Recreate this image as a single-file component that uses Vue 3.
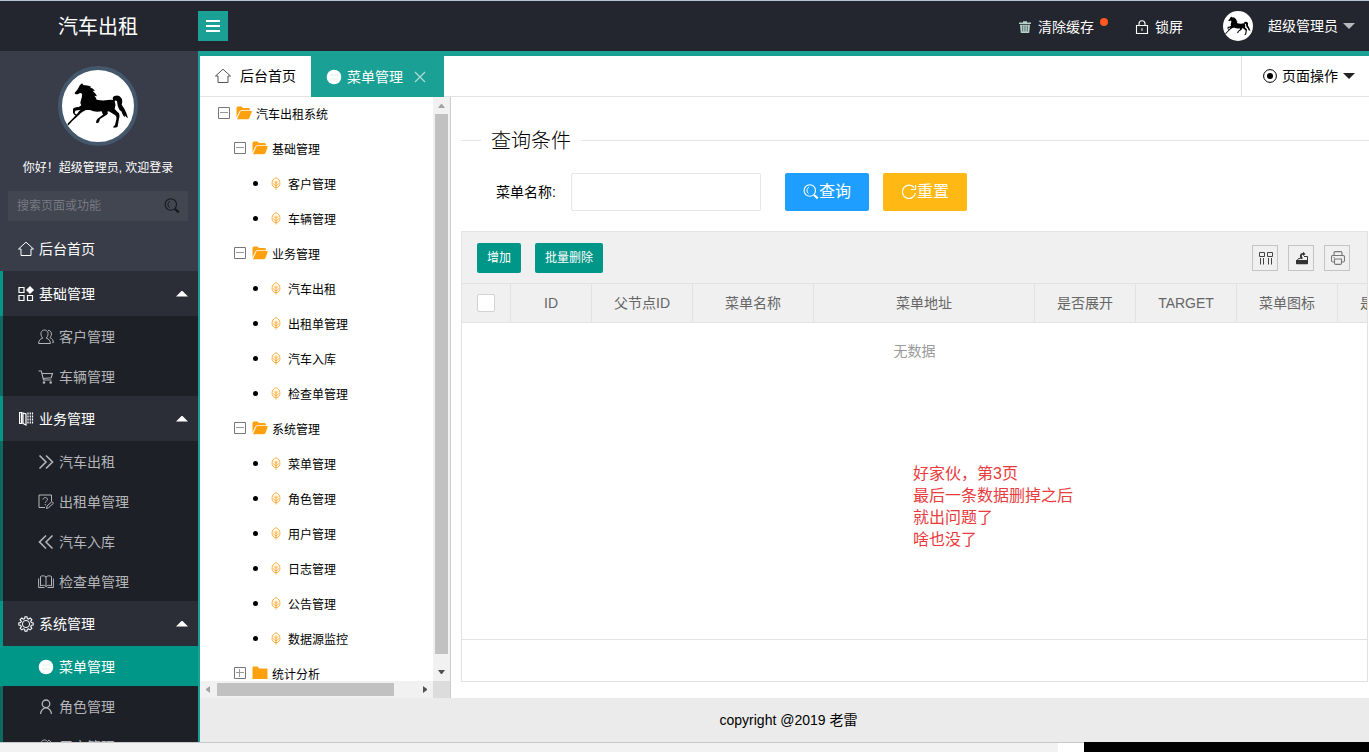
<script setup>
import { ref } from 'vue'

const keyword = ref('')
const menuName = ref('')
const checkedAll = ref(false)

const groups = [
  {
    title: '基础管理',
    icon: 'blocks',
    items: [
      { title: '客户管理', icon: 'users' },
      { title: '车辆管理', icon: 'cart' },
    ],
  },
  {
    title: '业务管理',
    icon: 'ledger',
    items: [
      { title: '汽车出租', icon: 'next' },
      { title: '出租单管理', icon: 'form' },
      { title: '汽车入库', icon: 'prev' },
      { title: '检查单管理', icon: 'book' },
    ],
  },
  {
    title: '系统管理',
    icon: 'gear',
    items: [
      { title: '菜单管理', icon: 'disc', active: true },
      { title: '角色管理', icon: 'person' },
      { title: '用户管理', icon: 'users' },
    ],
  },
]

const tree = [
  { title: '汽车出租系统', level: 1, open: true },
  { title: '基础管理', level: 2, open: true },
  { title: '客户管理', level: 3 },
  { title: '车辆管理', level: 3 },
  { title: '业务管理', level: 2, open: true },
  { title: '汽车出租', level: 3 },
  { title: '出租单管理', level: 3 },
  { title: '汽车入库', level: 3 },
  { title: '检查单管理', level: 3 },
  { title: '系统管理', level: 2, open: true },
  { title: '菜单管理', level: 3 },
  { title: '角色管理', level: 3 },
  { title: '用户管理', level: 3 },
  { title: '日志管理', level: 3 },
  { title: '公告管理', level: 3 },
  { title: '数据源监控', level: 3 },
  { title: '统计分析', level: 2, open: false },
]

const columns = [
  { title: 'ID', size: 'w80' },
  { title: '父节点ID', size: 'w100' },
  { title: '菜单名称', size: 'w120' },
  { title: '菜单地址', size: 'w220' },
  { title: '是否展开', size: 'w100' },
  { title: 'TARGET', size: 'w100' },
  { title: '菜单图标', size: 'w100' },
  { title: '是否可用', size: 'w100' },
]
</script>

<template>
  <div class="page">
    <svg class="sprite" aria-hidden="true">
      <symbol id="home" viewBox="0 0 16 16"><path d="M.5 8 8 1.200 15.500 8H13v6.500H3V8z" fill="none" stroke="currentColor" /></symbol>
      <symbol id="blocks" viewBox="0 0 16 16"><path d="M1 1.500h5v5H1zM1 9.500h5v5H1zM9.500 9.500h5v5h-5z" fill="none" stroke="currentColor" stroke-width="1.200" /><path d="M12 0l4 4-4 4-4-4z" fill="currentColor" /></symbol>
      <symbol id="ledger" viewBox="0 0 16 16"><path d="M1.600 1.500h2v11h-2zM5 2l3 1v11l-3-1.500z" fill="none" stroke="currentColor" stroke-width="1.200" /><path d="M10 1.500v12M12.300 1.500v12M14.500 1.500v12" stroke="currentColor" stroke-width="1.200" stroke-dasharray="2 1" /></symbol>
      <symbol id="gear" viewBox="0 0 16 16"><path d="M6.700 2.600 7 .7h2l.3 1.900 1.300.5 1.600-1.100 1.700 1.700-1.200 1.600.6 1.300 1.900.4v2l-1.900.3-.6 1.400 1.200 1.600-1.700 1.600-1.600-1.100-1.300.5-.3 1.900H7l-.3-1.900-1.300-.5-1.600 1.100-1.700-1.600 1.200-1.600-.6-1.400L.8 9V7l1.900-.4.6-1.300-1.200-1.600L3.800 2l1.600 1.100z" fill="none" stroke="currentColor" stroke-width="1.100" /><circle cx="8" cy="8" r="3.600" fill="none" stroke="currentColor" /></symbol>
      <symbol id="users" viewBox="0 0 16 16"><path d="M.6 14.500C.8 11.500 2 10 4.700 9.200 1.500 5.200 3 1 6.500 1s5 4.200 1.800 8.200c2.700.8 3.900 2.300 4.100 5.300zM10 1.400c3.600 0 4.500 4.300 2 7.200 2.300 1 3.300 2.800 3.400 5h-1.200" fill="none" stroke="currentColor" /></symbol>
      <symbol id="cart" viewBox="0 0 16 16"><path d="M.5 2h2.800l2.200 9h8M4 4.500h10.500l-1.300 4.200-8.200.8" fill="none" stroke="currentColor" stroke-width="1.100" /><circle cx="6" cy="13.500" r="1.300" fill="currentColor" /><circle cx="12.700" cy="13.500" r="1.300" fill="currentColor" /></symbol>
      <symbol id="next" viewBox="0 0 16 16"><path d="M1.500 1.500 8 8l-6.500 6.500M8 1.500 14.500 8 8 14.500" fill="none" stroke="currentColor" stroke-width="1.600" /></symbol>
      <symbol id="prev" viewBox="0 0 16 16"><path d="M8 1.500 1.500 8 8 14.500M14.500 1.500 8 8l6.500 6.500" fill="none" stroke="currentColor" stroke-width="1.600" /></symbol>
      <symbol id="form" viewBox="0 0 16 16"><path d="M13.500 7V1H1v12.500h6M5 5.500C5 3 9.500 3 9.500 5.500c0 1.600-2.200 1.500-2.200 3.300M7.300 10v1.300M8.500 14.500l.5-2.500 5-4.500 1.500 1.800-5 4.400z" fill="none" stroke="currentColor" /></symbol>
      <symbol id="book" viewBox="0 0 16 16"><path d="M8 3C6.500 1.500 4 1.500 2.500 2.500V12C4 11 6.500 11 8 12.500 9.500 11 12 11 13.500 12V2.500C12 1.500 9.500 1.500 8 3v9.500M.6 4.500v9h5.900M15.400 4.500v9H9.500" fill="none" stroke="currentColor" /></symbol>
      <symbol id="disc" viewBox="0 0 16 16"><circle cx="8" cy="8" r="7.300" fill="currentColor" /><path d="M4 6h8M4 10h8" stroke="#1aa094" stroke-width=".4" opacity=".35" /></symbol>
      <symbol id="person" viewBox="0 0 16 16"><circle cx="8" cy="4.800" r="3.800" fill="none" stroke="currentColor" stroke-width="1.300" /><path d="M2.500 15c.3-3.500 2.500-5.500 5.500-6.300 3 .8 5.200 2.800 5.500 6.300" fill="none" stroke="currentColor" stroke-width="1.300" /></symbol>
      <symbol id="search" viewBox="0 0 16 16"><circle cx="6.800" cy="6.500" r="5.700" fill="none" stroke="currentColor" stroke-width="1.100" /><path d="M5.500 9.500C3.300 8 3.500 4.300 6 3.300" fill="none" stroke="currentColor" /><path d="m11 11 3.800 3.300" stroke="currentColor" stroke-width="2.200" /></symbol>
      <symbol id="refresh" viewBox="0 0 16 16"><path d="M14.500 9A6.600 6.600 0 1 1 13 3.500M14.500 1v4.500H10" fill="none" stroke="currentColor" stroke-width="1.200" /></symbol>
      <symbol id="trash" viewBox="0 0 12 12"><path d="M0 1.500h12V3H0zM4 .2h4v1.600H4zM1 3.700h10L10.200 12H1.800z" fill="#b5cfc8" /><path d="M3.700 4.500v6M6 4.500v6M8.300 4.500v6" stroke="#3d5550" stroke-width=".8" /></symbol>
      <symbol id="lock" viewBox="0 0 14 14"><path d="M1.500 5.500h11v8h-11zM4 5.500V3.800a3 3 0 0 1 6 0v1.700M7 8.300v2.400" fill="none" stroke="currentColor" stroke-width="1.100" /></symbol>
      <symbol id="target" viewBox="0 0 14 14"><circle cx="7" cy="7" r="6.400" fill="none" stroke="currentColor" /><circle cx="7" cy="7" r="3" fill="currentColor" /></symbol>
      <symbol id="close" viewBox="0 0 12 12"><path d="m1 1 10 10M11 1 1 11" stroke="currentColor" stroke-width="1.100" /></symbol>
      <symbol id="minus" viewBox="0 0 12 12"><path d="M.5.5h11v11H.5z" fill="none" stroke="#777" /><path d="M2 5.500h8" stroke="#999" /></symbol>
      <symbol id="plus" viewBox="0 0 12 12"><path d="M.5.5h11v11H.5z" fill="none" stroke="#777" /><path d="M2 5.500h8M5.500 2v8" stroke="#999" /></symbol>
      <symbol id="folder-open" viewBox="0 0 16 14"><path d="M.5 11.500V2q0-1.500 1.500-1.500h3.500L7 2h5.500Q14 2 14 3.500v.7H5.500Q3.800 4.200 3.200 5.800z" fill="#ffa00f" /><path d="M1 13.300 4 6.300q.5-1.200 1.600-1.200h9.600q.8 0 .5.900l-2.400 6.300q-.4 1-1.400 1z" fill="#ffa00f" /></symbol>
      <symbol id="folder" viewBox="0 0 16 14"><path d="M.5 1.500q0-1 1-1h4L7 2.500h7.500q1 0 1 1v9.500H.5z" fill="#ffa00f" /></symbol>
      <symbol id="leaf" viewBox="0 0 10 13"><path d="M5 .7C7.500 2 9 3.500 8.800 5.500 9.500 8 8 10.400 5 10.700 2 10.400.5 8 1.200 5.500 1 3.500 2.500 2 5 .7zM5 3.500v9M5 6.500l2.300-2.200M5 9l3-2.500M5 6.500 2.800 4.300M5 9 2 6.500" fill="none" stroke="#f9a52a" stroke-width=".9" /></symbol>
      <symbol id="cols" viewBox="0 0 14 14"><path d="M.5 1.500h5v4h-5zM8.500 1.500h5v4h-5zM1.500 7v6.500M4.500 7v6.500M9.500 7v6.500M12.500 7v6.500" fill="none" stroke="#444" /></symbol>
      <symbol id="export" viewBox="0 0 14 14"><path d="M1 9h12v3.500q0 .8-.8.800H1.800q-.8 0-.8-.8z" fill="#333" /><path d="M2.500 9 3.500 7.500h2M9 5.500h3.500V9" fill="none" stroke="#333" /><path d="M5.500 7.500C4 4 5.500 2 8 2V.7L10.500 3 8 5V3.700C6.500 3.700 6.500 5.500 7.500 6.500V8h-2z" fill="#333" /></symbol>
      <symbol id="print" viewBox="0 0 14 14"><path d="M3 4.500V2q0-1.400 1.400-1.400h5.200Q11 .6 11 2v2.500M3 11H2Q.5 11 .5 9.500V6Q.5 4.500 2 4.500h10q1.500 0 1.500 1.500v3.500Q13.500 11 12 11h-1M3.500 8h7v4q0 1.400-1.400 1.400H4.900Q3.500 13.400 3.500 12zM2.500 6.500h1" fill="none" stroke="#777" stroke-width="1.100" /></symbol>
      <symbol id="horse" viewBox="36 30 216 216">
        <path d="M97 71l4 5q11-2 23 4l-4 2q10 4 15 11l-7-1q9 8 13 17l-8-2q5 5 7 12 17 4 34 1 10-2 15 0-3-10 5-12 13-5 22 9 2 7-1 17 9 12 14 25l5 16q-5-3-10-9l1 6q-6-5-8-11l-2-6q-8-5-11-15-2-8-3-16-4-5-7-1 5 13 0 24 6 7 13 13 3 6 0 16l-4 22q2 5-13 5-2-3 5-8l4-17q2-8-3-12l-17-11q-5-2-7 0 4 6-4 11l-18 11-3 9q-3 5-9 2 0-6 4-11 8-7 17-13l-4-10q-20 4-35-4h-12q-12 6-16 10-12 12-26 24-8 10-13 14-3-2 1-8 6-6 12-12l18-20q2-5 8-9l-16 3-2 8 7 5q3 3-1 4-10-6-11-11v-12q6-6 17-5 6-3 8-5-5-8-1-16 4-10 3-18-4-5-10-1-6 4-11 0-3-3 2-6 7-7 10-15 1-5 10-11z" fill="#000" />
      </symbol>
    </svg>

    <header class="header">
      <h1 class="logo">汽车出租</h1>
      <button class="toggle" type="button" aria-label="切换菜单"><span></span><span></span><span></span></button>
      <nav class="tools">
        <a class="tool cache" href="#"><svg class="icon12"><use href="#trash" /></svg>清除缓存<i class="dot"></i></a>
        <a class="tool lock" href="#"><svg class="icon14"><use href="#lock" /></svg>锁屏</a>
        <a class="tool user" href="#"><svg class="face"><use href="#horse" /></svg>超级管理员<i class="caret down pale"></i></a>
      </nav>
    </header>

    <div class="body">
      <aside class="side">
        <div class="profile">
          <svg class="avatar"><use href="#horse" /></svg>
          <p class="hello">你好！超级管理员, 欢迎登录</p>
        </div>
        <label class="find">
          <input v-model="keyword" type="text" placeholder="搜索页面或功能" aria-label="搜索页面或功能" />
          <svg class="icon16"><use href="#search" /></svg>
        </label>
        <a class="nav-home" href="#"><svg class="icon16"><use href="#home" /></svg>后台首页</a>
        <section v-for="g in groups" :key="g.title" class="group">
          <a class="group-title" href="#"><svg class="icon16"><use :href="'#' + g.icon" /></svg>{{ g.title }}<i class="caret up"></i></a>
          <a v-for="i in g.items" :key="i.title" class="item" :class="{ active: i.active }" href="#">
            <svg class="icon16"><use :href="'#' + i.icon" /></svg>{{ i.title }}
          </a>
        </section>
      </aside>

      <div class="main">
        <div class="tabs">
          <a class="tab home" href="#"><svg class="icon16"><use href="#home" /></svg>后台首页</a>
          <div class="tab current">
            <svg class="icon16"><use href="#disc" /></svg>菜单管理
            <button class="close" type="button" aria-label="关闭"><svg class="icon12"><use href="#close" /></svg></button>
          </div>
          <button class="page-op" type="button"><svg class="icon14"><use href="#target" /></svg>页面操作<i class="caret down dark"></i></button>
        </div>

        <div class="workspace">
          <div class="tree-pane">
            <ul class="tree">
              <li v-for="n in tree" :key="n.level + n.title" class="node" :class="'level' + n.level">
                <span class="marks">
                  <template v-if="n.level < 3">
                    <svg class="icon12"><use :href="n.open ? '#minus' : '#plus'" /></svg>
                    <svg class="folder"><use :href="n.open ? '#folder-open' : '#folder'" /></svg>
                  </template>
                  <template v-else>
                    <i class="bullet"></i>
                    <svg class="leaf"><use href="#leaf" /></svg>
                  </template>
                </span>
                <span>{{ n.title }}</span>
              </li>
            </ul>
            <div class="bar vertical"><i class="arrow top"></i><i class="thumb"></i><i class="arrow bottom"></i></div>
            <div class="bar horizontal"><i class="arrow left"></i><span class="track"><i class="thumb"></i></span><i class="arrow right"></i></div>
            <div class="corner"></div>
          </div>

          <main class="content">
            <fieldset class="query"><legend>查询条件</legend></fieldset>
            <form class="form" @submit.prevent>
              <label for="menu-name">菜单名称:</label>
              <input id="menu-name" v-model="menuName" type="text" />
              <button class="btn blue" type="submit"><svg class="icon16"><use href="#search" /></svg>查询</button>
              <button class="btn amber" type="reset"><svg class="icon16"><use href="#refresh" /></svg>重置</button>
            </form>
            <div class="grid">
              <div class="toolbar">
                <button class="small" type="button">增加</button>
                <button class="small" type="button">批量删除</button>
                <div class="actions">
                  <button type="button" aria-label="筛选列"><svg class="icon14"><use href="#cols" /></svg></button>
                  <button type="button" aria-label="导出"><svg class="icon14"><use href="#export" /></svg></button>
                  <button type="button" aria-label="打印"><svg class="icon14"><use href="#print" /></svg></button>
                </div>
              </div>
              <div class="rows">
                <table>
                  <thead>
                    <tr>
                      <th class="w48"><input v-model="checkedAll" type="checkbox" aria-label="全选" /></th>
                      <th v-for="c in columns" :key="c.title" :class="c.size">{{ c.title }}</th>
                    </tr>
                  </thead>
                </table>
                <p class="empty">无数据</p>
                <p class="note">好家伙，第3页<br />最后一条数据删掉之后<br />就出问题了<br />啥也没了</p>
              </div>
              <div class="pager"></div>
            </div>
          </main>
        </div>

        <footer class="footer">copyright @2019 老雷</footer>
      </div>
    </div>
    <div class="status"><i class="status-gap"></i><i class="status-dark"></i></div>
  </div>
</template>

<style>
body {
  overflow: hidden;
}
</style>

<style scoped>
* {
  box-sizing: border-box;
}
.page {
  display: flex;
  flex-direction: column;
  height: 100vh;
  overflow: hidden;
  border-top: 1px solid #b4c6d6;
  background: #fff;
  color: #000;
  font: 14px/20px "Liberation Sans", "Noto Sans CJK SC", sans-serif;
}
.sprite {
  position: absolute;
  width: 0;
  height: 0;
}
svg {
  display: block;
  flex: none;
}
a {
  color: inherit;
  text-decoration: none;
}
button,
input {
  margin: 0;
  padding: 0;
  border: 0;
  font: inherit;
  color: inherit;
}
button {
  background: none;
  cursor: pointer;
}
p,
ul,
h1 {
  margin: 0;
  padding: 0;
}
.icon12 {
  width: 12px;
  height: 12px;
}
.icon14 {
  width: 14px;
  height: 14px;
}
.icon16 {
  width: 16px;
  height: 16px;
}
.caret {
  width: 12px;
  height: 6px;
  background: #fff;
}
.caret.down {
  clip-path: polygon(0 0, 100% 0, 50% 100%);
}
.caret.up {
  clip-path: polygon(50% 0, 100% 100%, 0 100%);
}
.caret.pale {
  background: #b9bbc0;
}
.caret.dark {
  background: #222;
}

.header {
  display: flex;
  flex: none;
  align-items: center;
  height: 50px;
  background: #23262e;
  color: #fff;
}
.logo {
  width: 198px;
  padding: 2px 2px 0 0;
  text-align: center;
  font-size: 20px;
  font-weight: 400;
}
.toggle {
  display: flex;
  flex-direction: column;
  align-items: center;
  justify-content: center;
  gap: 3px;
  width: 30px;
  height: 30px;
  background: #1aa094;
}
.toggle span {
  width: 14px;
  height: 2px;
  background: #fff;
}
.tools {
  display: flex;
  align-items: center;
  margin-left: auto;
  padding-right: 14px;
}
.tool {
  display: flex;
  align-items: center;
}
.cache,
.lock {
  padding-top: 2px;
}
.cache {
  position: relative;
  gap: 7px;
  margin-right: 41px;
}
.dot {
  position: absolute;
  top: 3px;
  right: -14px;
  width: 8px;
  height: 8px;
  border-radius: 50%;
  background: #ff5722;
}
.lock {
  gap: 6px;
  margin-right: 40px;
}
.face {
  width: 30px;
  height: 30px;
  margin-right: 15px;
  border-radius: 50%;
  background: #fff;
}
.user .caret {
  margin-left: 5px;
}

.body {
  display: flex;
  flex: 1;
  min-height: 0;
}
.side {
  flex: none;
  width: 200px;
  overflow: hidden;
  border-right: 2px solid #1aa094;
  background: #393d49;
  color: #fff;
}
.profile {
  display: flex;
  flex-direction: column;
  align-items: center;
  gap: 12px;
  padding: 15px 2px 13px 0;
}
.avatar {
  width: 80px;
  height: 80px;
  border: 4px solid #44576b;
  border-radius: 50%;
  background: #fff;
}
.hello {
  font-size: 12px;
}
.find {
  display: flex;
  align-items: center;
  height: 30px;
  margin: 0 10px 5px 8px;
  padding: 0 8px 0 9px;
  background: #424650;
  color: #15171c;
}
.find input {
  flex: 1;
  min-width: 0;
  background: none;
  outline: 0;
  color: #fff;
  font-size: 12px;
}
.find input::placeholder {
  color: #777a82;
}
.nav-home,
.group-title {
  display: flex;
  align-items: center;
  gap: 5px;
  height: 45px;
  padding: 0 10px 0 18px;
}
.group {
  border-left: 3px solid #0c6a61;
  background: #1e2027;
}
.group-title,
.item.active {
  margin-left: -3px;
  border-left: 3px solid #009688;
}
.group-title {
  padding-left: 15px;
  background: #2b2e37;
}
.group-title .caret {
  margin-left: auto;
}
.item {
  display: flex;
  align-items: center;
  gap: 5px;
  height: 40px;
  padding: 2px 0 0 35px;
  color: #b4b5b8;
}
.item.active {
  background: #009688;
  color: #fff;
}

.main {
  display: flex;
  flex: 1;
  flex-direction: column;
  min-width: 0;
  border-top: 5px solid #1aa094;
}
.tabs {
  display: flex;
  flex: none;
  height: 41px;
  border-bottom: 1px solid #e2e2e2;
}
.tab {
  display: flex;
  align-items: center;
  padding: 0 15px;
}
.tab.home {
  gap: 9px;
}
.tab.home .icon16 {
  color: #555;
}
.tab.current {
  gap: 5px;
  height: 41px;
  padding-right: 18px;
  background: #1aa094;
  color: #fff;
}
.close {
  margin-left: 6px;
  color: #b5ddd8;
}
.page-op {
  display: flex;
  align-items: center;
  gap: 5px;
  margin-left: auto;
  padding: 0 14px 0 21px;
  border-left: 1px solid #e2e2e2;
}
.workspace {
  display: flex;
  flex: 1;
  min-height: 0;
}
.tree-pane {
  display: grid;
  flex: none;
  grid-template-columns: 1fr 17px;
  grid-template-rows: minmax(0, 1fr) 17px;
  width: 251px;
  border-right: 1px solid #ccc;
}
.tree {
  overflow: hidden;
  list-style: none;
  font-size: 12px;
}
.node,
.marks {
  display: flex;
  align-items: center;
}
.node {
  height: 35px;
}
.marks {
  padding-bottom: 3px;
}
.level1 {
  padding-left: 18px;
}
.level2 {
  padding-left: 34px;
}
.level3 {
  padding-left: 53px;
}
.folder {
  width: 16px;
  height: 14px;
  margin: 0 4px 0 6px;
}
.bullet {
  width: 5px;
  height: 5px;
  border-radius: 50%;
  background: #000;
}
.leaf {
  width: 10px;
  height: 13px;
  margin: 0 7px 0 13px;
}
.bar {
  display: flex;
  align-items: center;
  background: #f1f1f1;
}
.bar.vertical {
  flex-direction: column;
}
.bar .thumb {
  display: block;
  background: #c1c1c1;
}
.vertical .thumb {
  width: 13px;
  flex: 1;
  margin-bottom: 10px;
}
.track {
  flex: 1;
}
.horizontal .thumb {
  width: 89%;
  height: 13px;
}
.arrow {
  flex: none;
  width: 17px;
  height: 17px;
  background: #505050;
}
.arrow.top {
  background: #a3a3a3;
  clip-path: polygon(5px 11px, 8px 7px, 9px 7px, 12px 11px);
}
.arrow.bottom {
  clip-path: polygon(5px 6px, 12px 6px, 9px 10px, 8px 10px);
}
.arrow.left {
  background: #a3a3a3;
  clip-path: polygon(10px 5px, 10px 12px, 6px 9px, 6px 8px);
}
.arrow.right {
  clip-path: polygon(7px 5px, 7px 12px, 11px 9px, 11px 8px);
}
.corner {
  background: #dcdcdc;
}

.content {
  display: flex;
  flex: 1;
  flex-direction: column;
  min-width: 0;
  padding: 29px 0 16px 10px;
}
.query {
  height: 27px;
  margin: 0;
  padding: 0;
  border: 0;
  border-top: 1px solid #e2e2e2;
}
.query legend {
  margin-left: 20px;
  padding: 2px 10px 0;
  font-size: 20px;
  line-height: 26px;
  font-weight: 300;
}
.form {
  display: flex;
  align-items: center;
  margin: 20px 0;
  padding-left: 35px;
}
.form input {
  width: 190px;
  height: 38px;
  margin: 0 24px 0 15px;
  padding: 0 10px;
  border: 1px solid #e6e6e6;
  border-radius: 2px;
}
.btn {
  display: flex;
  align-items: center;
  height: 38px;
  margin-right: 14px;
  padding: 0 18px;
  border-radius: 2px;
  color: #fff;
  font-size: 16px;
}
.blue {
  background: #1e9fff;
}
.amber {
  background: #ffb814;
}
.grid {
  display: flex;
  flex: 1;
  flex-direction: column;
  min-height: 0;
  margin-right: 1px;
  border: 1px solid #e2e2e2;
}
.toolbar {
  display: flex;
  align-items: center;
  gap: 14px;
  height: 51px;
  padding: 0 17px 0 15px;
  background: #f0f0f0;
}
.small {
  height: 30px;
  padding: 0 10px;
  border-radius: 2px;
  background: #009688;
  color: #fff;
  font-size: 12px;
}
.actions {
  display: flex;
  gap: 10px;
  margin-left: auto;
}
.actions button {
  display: flex;
  align-items: center;
  justify-content: center;
  width: 26px;
  height: 26px;
  padding: 1px 0 0 1px;
  border: 1px solid #c4c4c4;
}
.rows {
  position: relative;
  flex: 1;
  min-height: 0;
  overflow: hidden;
}
table {
  width: 976px;
  table-layout: fixed;
  border-collapse: separate;
  border-spacing: 0;
  background: #f0f0f0;
  color: #666;
}
th {
  height: 40px;
  padding: 0;
  border: 1px solid #e2e2e2;
  border-left: 0;
  font-weight: 400;
}
.w48 {
  width: 49px;
}
.w80 {
  width: 81px;
}
.w100 {
  width: 101px;
}
.w120 {
  width: 121px;
}
.w220 {
  width: 221px;
}
th input {
  display: block;
  width: 18px;
  height: 18px;
  margin: 0 auto;
  border: 1px solid #d2d2d2;
  border-radius: 2px;
  background: #fff;
  appearance: none;
}
th input:checked {
  background: #5fb878;
}
.empty {
  padding: 18px 0;
  color: #999;
  text-align: center;
}
.note {
  position: absolute;
  top: 180px;
  left: 451px;
  color: #e93b3d;
  font-size: 16px;
  line-height: 22px;
}
.pager {
  flex: none;
  height: 42px;
  border-top: 1px solid #e2e2e2;
}
.footer {
  flex: none;
  height: 44px;
  padding-left: 8px;
  background: #ebebeb;
  line-height: 44px;
  text-align: center;
}
.status {
  display: flex;
  flex: none;
  justify-content: flex-end;
  height: 10px;
  border-top: 1px solid #c8c8c8;
  background: #f2f2f2;
}
.status-gap {
  width: 26px;
  background: #fff;
}
.status-dark {
  width: 285px;
  margin-top: -1px;
  background: #000;
}
</style>
